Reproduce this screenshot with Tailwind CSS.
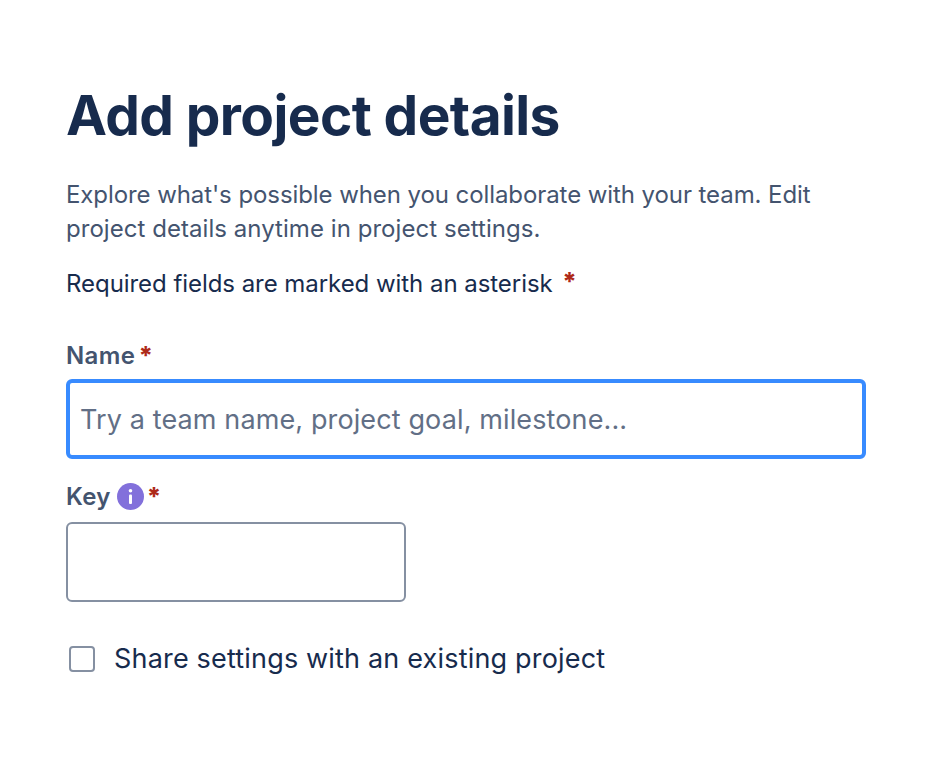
<!DOCTYPE html>
<html lang="en">
<head>
    <meta charset="UTF-8">
    <title>Add project details</title>
    <script src="https://cdn.jsdelivr.net/npm/@tailwindcss/browser@4"></script>
</head>
<body class="bg-white min-h-screen font-['Inter','Noto_Sans',sans-serif]">
    <div class="w-[800px] ml-[66px] pt-[81px]">
        <h1 class="text-[55px] leading-[68px] font-bold text-[#172b4d] tracking-[-0.6px]">Add project details</h1>
        <p class="mt-[29px] text-[24px] leading-[34px] text-[#44546f]"><span class="tracking-[-0.08px]">Explore what's possible when you collaborate with your team. Edit</span> <span class="tracking-[0.05px]">project details anytime in project settings.</span></p>
        <p class="mt-[21px] text-[24px] leading-[34px] text-[#172b4d] tracking-[-0.05px]">Required fields are marked with an asterisk <span class="text-[#ae2a19] text-[25px] leading-none font-extrabold ml-[3px] relative -top-[2px]">*</span></p>
        <label class="flex items-center gap-[3px] mt-[41px] text-[24px] leading-[28px] font-semibold tracking-[0.4px] text-[#44546f]">Name <span class="text-[#ae2a19] text-[25px] font-extrabold relative -top-[1px]">*</span></label>
        <div class="mt-[9px] pt-[2px] h-[80px] w-[800px] border-[4px] border-[#388bff] rounded-[6px] flex items-center px-[10px] text-[27px] tracking-[0.12px] text-[#626f86]">Try a team name, project goal, milestone...</div>
        <div class="flex items-center mt-[24px] text-[24px] leading-[28px] font-semibold tracking-[0.3px] text-[#44546f]">
            Key
            <svg class="ml-[6px] w-[27px] h-[27px] relative -top-[1px]" viewBox="0 0 27 27">
                <circle cx="13.5" cy="13.5" r="13.5" fill="#8270db"/>
                <rect x="12" y="11.5" width="3" height="9.5" rx="1" fill="#fff"/>
                <circle cx="13.5" cy="7.8" r="1.8" fill="#fff"/>
            </svg>
            <span class="ml-[3px] text-[#ae2a19] text-[25px] font-extrabold relative -top-[1px]">*</span>
        </div>
        <div class="mt-[11px] h-[80px] w-[340px] border-2 border-[#8590a2] rounded-[6px]"></div>
        <label class="flex items-center gap-[19px] mt-[37px] ml-[3px] text-[27px] tracking-[0.18px] text-[#172b4d]">
            <span class="w-[26px] h-[26px] border-2 border-[#8590a2] rounded-[4px]"></span>
            Share settings with an existing project
        </label>
    </div>
</body>
</html>
